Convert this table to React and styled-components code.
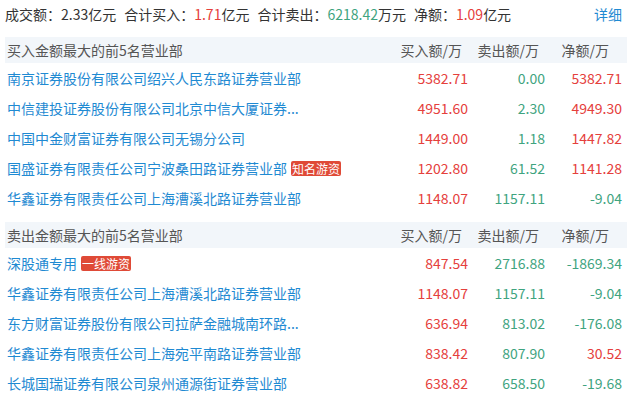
import React from "react";
import styled, { createGlobalStyle } from "styled-components";

const Global = createGlobalStyle`
  html, body { margin: 0; padding: 0; background: #fff; }
  body { font-family: "Noto Sans CJK SC", "Microsoft YaHei", sans-serif; font-size: 14px; color: #333; }
`;

const RED = "#e5403c";
const GREEN = "#3fa47f";
const BLUE = "#1f8ad2";

const Page = styled.div`
  width: 627px;
  padding: 0 0 0 5px;
  box-sizing: border-box;
`;

const Summary = styled.div`
  display: flex;
  align-items: center;
  height: 28px;
  padding-right: 5px;
  margin-bottom: 9px;
  line-height: 28px;
  white-space: nowrap;
`;

const Stat = styled.span`
  margin-right: 8px;
  color: #333;
`;

const Num = styled.span`
  color: ${(p) => (p.$tone === "green" ? GREEN : RED)};
`;

const Detail = styled.a`
  margin-left: auto;
  color: ${BLUE};
  text-decoration: none;
`;

const Section = styled.section`
  margin-bottom: ${(p) => (p.$gap ? "9px" : "0")};
`;

const Grid = styled.div`
  display: grid;
  grid-template-columns: 1fr 77px 77px 77px;
  align-items: center;
  padding: 0 5px 0 2px;
  height: ${(p) => p.$h}px;
  line-height: ${(p) => p.$h}px;
  white-space: nowrap;
`;

const Band = styled(Grid)`
  background: #f2f6fa;
  color: #555;
`;

const HeadCell = styled.div`
  text-align: right;
  padding-right: ${(p) => p.$pr}px;
`;

const Name = styled.div`
  display: flex;
  align-items: center;
  color: ${BLUE};
  overflow: hidden;
`;

const Badge = styled.span`
  display: inline-block;
  margin-left: 4px;
  height: 15px;
  line-height: 15px;
  padding: 0 1px;
  font-size: 12px;
  color: #fff;
  background: #df4a37;
  border-radius: 2px;
`;

const Value = styled.div`
  text-align: right;
  color: ${(p) => (p.$tone === "green" ? GREEN : RED)};
`;

const tone = (v) => (v.startsWith("-") || v === "0.00" ? "green" : "red");

const buyRows = [
  ["南京证券股份有限公司绍兴人民东路证券营业部", null, "5382.71", "0.00", "5382.71"],
  ["中信建投证券股份有限公司北京中信大厦证券...", null, "4951.60", "2.30", "4949.30"],
  ["中国中金财富证券有限公司无锡分公司", null, "1449.00", "1.18", "1447.82"],
  ["国盛证券有限责任公司宁波桑田路证券营业部", "知名游资", "1202.80", "61.52", "1141.28"],
  ["华鑫证券有限责任公司上海漕溪北路证券营业部", null, "1148.07", "1157.11", "-9.04"],
];

const sellRows = [
  ["深股通专用", "一线游资", "847.54", "2716.88", "-1869.34"],
  ["华鑫证券有限责任公司上海漕溪北路证券营业部", null, "1148.07", "1157.11", "-9.04"],
  ["东方财富证券股份有限公司拉萨金融城南环路...", null, "636.94", "813.02", "-176.08"],
  ["华鑫证券有限责任公司上海宛平南路证券营业部", null, "838.42", "807.90", "30.52"],
  ["长城国瑞证券有限公司泉州通源街证券营业部", null, "638.82", "658.50", "-19.68"],
];

function Table({ title, rows, gap }) {
  return (
    <Section $gap={gap}>
      <Band $h={26}>
        <div>{title}</div>
        <HeadCell $pr={6}>买入额/万</HeadCell>
        <HeadCell $pr={6}>卖出额/万</HeadCell>
        <HeadCell $pr={13}>净额/万</HeadCell>
      </Band>
      {rows.map(([name, badge, buy, sell, net], i) => (
        <Grid $h={30} key={i}>
          <Name>
            {name}
            {badge && <Badge>{badge}</Badge>}
          </Name>
          <Value $tone="red">{buy}</Value>
          <Value $tone="green">{sell}</Value>
          <Value $tone={tone(net)}>{net}</Value>
        </Grid>
      ))}
    </Section>
  );
}

export default function App() {
  return (
    <Page>
      <Global />
      <Summary>
        <Stat>成交额：2.33亿元</Stat>
        <Stat>
          合计买入：<Num>1.71</Num>亿元
        </Stat>
        <Stat>
          合计卖出：<Num $tone="green">6218.42</Num>万元
        </Stat>
        <Stat>
          净额：<Num>1.09</Num>亿元
        </Stat>
        <Detail href="#">详细</Detail>
      </Summary>
      <Table title="买入金额最大的前5名营业部" rows={buyRows} gap />
      <Table title="卖出金额最大的前5名营业部" rows={sellRows} />
    </Page>
  );
}
